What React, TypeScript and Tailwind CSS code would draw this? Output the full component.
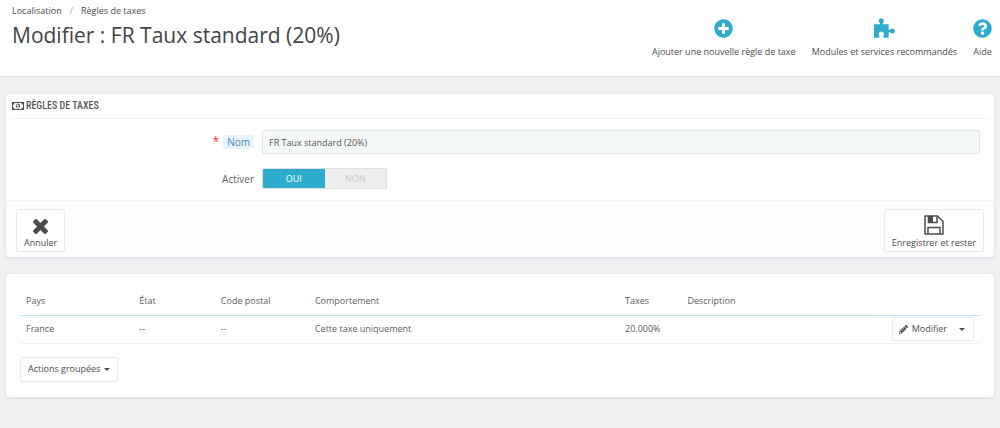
import { useState } from "react";
import { FaPlusCircle, FaQuestionCircle, FaPencilAlt } from "react-icons/fa";

function PuzzleIcon() {
  return (
    <svg viewBox="0 0 63 60" className="h-5 w-[21px]" fill="currentColor" aria-hidden="true">
      <circle cx="22" cy="8" r="7.500" />
      <circle cx="55" cy="39" r="7.500" />
      <path d="M18 12h8v7h18v16h9v8h-9v16H28v-5a8 8 0 1 0-12 0v5H0V19h18z" />
    </svg>
  );
}

function MoneyIcon() {
  return (
    <svg viewBox="0 0 24 16" className="h-2 w-3" aria-hidden="true">
      <path
        fill="currentColor"
        fillRule="evenodd"
        d="M0 0h24v16H0zM5 2a3 3 0 0 1-3 3v6a3 3 0 0 1 3 3h14a3 3 0 0 1 3-3V5a3 3 0 0 1-3-3zM12 3c2.500 0 4 2 4 5s-1.500 5-4 5-4-2-4-5 1.500-5 4-5zM11 5l-2 2 1 1 1-.5V10H10v1.500h4V10h-1V5z"
      />
    </svg>
  );
}

function CrossIcon() {
  return (
    <svg viewBox="110 366 1188 1188" className="mb-px size-[15px]" fill="currentColor" aria-hidden="true">
      <path d="M1298 1322q0 40-28 68l-136 136q-28 28-68 28t-68-28l-294-294-294 294q-28 28-68 28t-68-28l-136-136q-28-28-28-68t28-68l294-294-294-294q-28-28-28-68t28-68l136-136q28-28 68-28t68 28l294 294 294-294q28-28 68-28t68 28l136 136q28 28 28 68t-28 68l-294 294 294 294q28 28 28 68z" />
    </svg>
  );
}

function SaveIcon() {
  return (
    <svg viewBox="0 0 20 20" className="size-5" fill="none" stroke="currentColor" strokeWidth="1.500" aria-hidden="true">
      <path d="M1 1h12.500L19 6.500V19H1z" strokeLinejoin="round" />
      <path d="M4.500 1v6.500h8.500V1M4 19v-6.500h12V19" />
      <path d="M4.500 1h4.500v6.500H4.500z" fill="currentColor" stroke="none" />
    </svg>
  );
}

function Caret() {
  return (
    <svg viewBox="0 0 6 3" className="h-[3px] w-1.5" fill="currentColor" aria-hidden="true">
      <path d="M0 0h6L3 3z" />
    </svg>
  );
}

const toolbar = [
  { label: "Ajouter une nouvelle règle de taxe", icon: <FaPlusCircle className="size-[19px]" /> },
  { label: "Modules et services recommandés", icon: <PuzzleIcon /> },
  { label: "Aide", icon: <FaQuestionCircle className="size-[19px]" /> },
];

const rules = [
  { country: "France", state: "--", zip: "--", behavior: "Cette taxe uniquement", rate: "20.000%", description: "" },
];

const panel = "rounded-[4px] border border-[#e4e8eb] bg-white shadow-[0_1px_1px_#dfe2e5]";
const button = "rounded-[2px] border border-[#e8ebed] bg-white text-[#4c4c4c]";

export default function App() {
  const [name, setName] = useState("FR Taux standard (20%)");
  const [enabled, setEnabled] = useState(true);

  return (
    <div className="min-h-screen bg-[#eff1f3] font-['Open_Sans',sans-serif] text-[9px] leading-4 text-[#5c5c5c]">
      <header className="flex items-start justify-between border-b border-[#e3e6e8] bg-white pt-[3px] pr-2 pb-4 pl-3">
        <div>
          <nav className="flex gap-2 text-[#4c4c4c]">
            <a href="#localisation">Localisation</a>
            <span className="text-[#72c279]">/</span>
            <a href="#regles">Règles de taxes</a>
          </nav>
          <h1 className="text-[21px] leading-8 text-[#414448]">Modifier : FR Taux standard (20%)</h1>
        </div>
        <div className="flex gap-4 pt-[13px]">
          {toolbar.map((item) => (
            <a key={item.label} href="#" className="flex flex-col items-center text-[#4c4c4c]">
              <span className="flex h-7 items-center pb-1 text-[#2eacce]">{item.icon}</span>
              <span>{item.label}</span>
            </a>
          ))}
        </div>
      </header>

      <main className="flex flex-col gap-[15px] px-[5px] py-4">
        <form className={panel} onSubmit={(e) => e.preventDefault()}>
          <h2 className="mx-[3px] flex h-[25px] items-center gap-0.5 border-b border-[#f1f3f4] px-[3px] font-['Ubuntu_Condensed','Roboto_Condensed',sans-serif] text-[10px] font-medium text-[#555]">
            <MoneyIcon />
            RÈGLES DE TAXES
          </h2>
          <div className="flex flex-col gap-[14px] py-[11px] pr-3.5 pl-1.5">
            <div className="flex items-center gap-2">
              <div className="flex w-1/4 items-center justify-end gap-1">
                <span className="text-[12px] text-red-500">*</span>
                <label htmlFor="name" className="rounded-[2px] bg-[#e8f4fb] px-1 text-[10px] leading-[14px] text-[#4389b1]">
                  Nom
                </label>
              </div>
              <input
                id="name"
                value={name}
                onChange={(e) => setName(e.target.value)}
                className="h-6 flex-1 rounded-[2px] border border-[#dfe6e8] bg-[#f5f8f9] px-1.5 text-[#555]"
              />
            </div>
            <div role="radiogroup" aria-labelledby="active-label" className="flex items-center gap-2">
              <span id="active-label" className="w-1/4 text-right text-[10px]">
                Activer
              </span>
              <div className="flex h-[21px] w-[125px] overflow-hidden rounded-[2px] border border-[#dfdfdf] bg-[#eee] text-center leading-5 text-[#c4c4c4]">
                <label className="flex-1 has-checked:bg-[#2eacce] has-checked:text-white">
                  <input type="radio" name="active" className="sr-only" checked={enabled} onChange={() => setEnabled(true)} />
                  OUI
                </label>
                <label className="flex-1 has-checked:bg-[#2eacce] has-checked:text-white">
                  <input type="radio" name="active" className="sr-only" checked={!enabled} onChange={() => setEnabled(false)} />
                  NON
                </label>
              </div>
            </div>
          </div>
          <div className="flex justify-between rounded-b-[4px] border-t border-[#f0f2f4] bg-[#fcfdfe] px-2.5 pt-2 pb-[5px]">
            <button type="button" className={`${button} flex h-[43px] flex-col items-center justify-end px-[7px]`}>
              <CrossIcon />
              Annuler
            </button>
            <button type="submit" className={`${button} flex h-[43px] flex-col items-center justify-end px-[7px]`}>
              <SaveIcon />
              Enregistrer et rester
            </button>
          </div>
        </form>

        <section className={`${panel} px-3.5 pt-[13px] pb-[15px]`}>
          <table className="w-full table-fixed text-left">
            <colgroup>
              <col className="w-[11.8%]" />
              <col className="w-[8.5%]" />
              <col className="w-[9.8%]" />
              <col className="w-[32.3%]" />
              <col className="w-[6.5%]" />
              <col />
              <col className="w-[12%]" />
            </colgroup>
            <thead>
              <tr className="h-7 [&>th]:border-b [&>th]:border-[#bfe6f7] [&>th]:px-1.5 [&>th]:font-normal">
                <th>Pays</th>
                <th>État</th>
                <th>Code postal</th>
                <th>Comportement</th>
                <th>Taxes</th>
                <th>Description</th>
                <th aria-label="Actions" />
              </tr>
            </thead>
            <tbody>
              {rules.map((rule) => (
                <tr key={rule.country} className="h-7 border-b border-[#f1f3f4] [&>td]:px-1.5">
                  <td>{rule.country}</td>
                  <td>{rule.state}</td>
                  <td>{rule.zip}</td>
                  <td>{rule.behavior}</td>
                  <td>{rule.rate}</td>
                  <td>{rule.description}</td>
                  <td>
                    <div className={`${button} ml-auto flex h-6 w-fit`}>
                      <button type="button" className="flex items-center gap-1 pl-1.5">
                        <FaPencilAlt className="size-[9px]" />
                        Modifier
                      </button>
                      <button type="button" aria-label="Plus d'actions" className="px-2 pl-3">
                        <Caret />
                      </button>
                    </div>
                  </td>
                </tr>
              ))}
            </tbody>
          </table>
          <button type="button" className={`${button} mt-[13px] flex h-[25px] items-center gap-1 px-[7px]`}>
            Actions groupées
            <Caret />
          </button>
        </section>
      </main>
    </div>
  );
}
